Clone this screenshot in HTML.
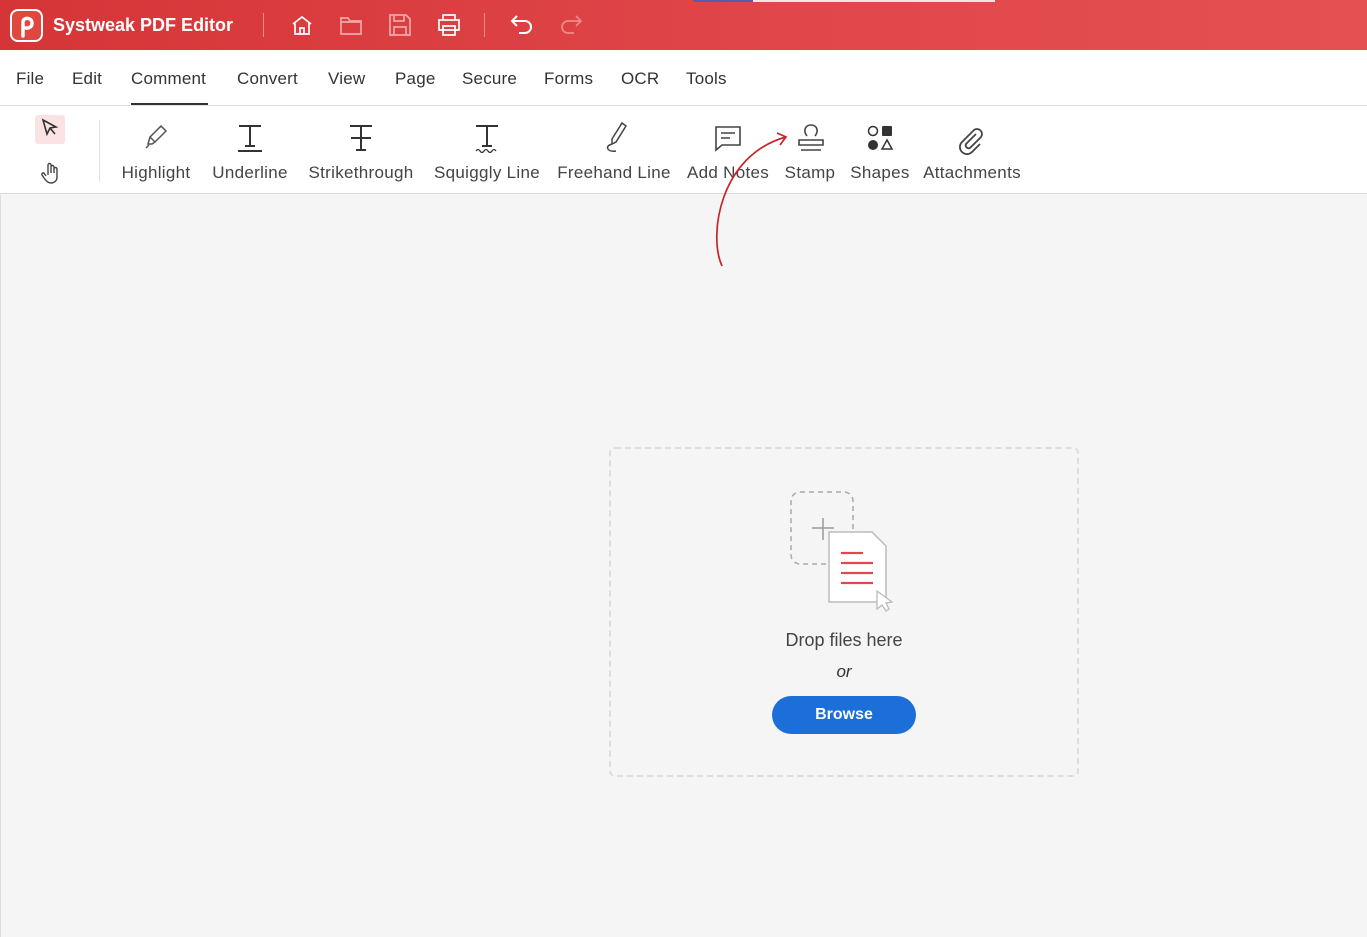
<!DOCTYPE html>
<html><head><meta charset="utf-8"><style>
*{margin:0;padding:0;box-sizing:border-box}
body{width:1367px;height:937px;overflow:hidden;background:#f5f5f5;font-family:"Liberation Sans",sans-serif;position:relative}
.top{position:absolute;left:0;top:0;width:1367px;height:50px;background:linear-gradient(90deg,#d63537,#e0474b 60%,#e55052)}
.menu{position:absolute;top:50px;left:0;width:1367px;height:56px;background:#fff;border-bottom:1px solid #e2e2e2}
.menu span{position:absolute;top:19px;font-size:17px;color:#333;letter-spacing:0.2px}
.tb{position:absolute;top:106px;left:0;width:1367px;height:88px;background:#fff;border-bottom:1px solid #d8d8d8}
.lbl{position:absolute;top:57px;font-size:17px;color:#444;white-space:nowrap;transform:translateX(-50%);letter-spacing:0.3px}
.ic{position:absolute}
.t{position:absolute;color:#fff}
</style></head><body>
<div class="top">
 <div style="position:absolute;left:10px;top:9px;width:33px;height:33px;border-radius:8px;border:2px solid #fff;background:#e0473f"></div>
 <svg class="ic" style="left:16px;top:14px" width="22" height="24"><path d="M7 22V10 M7 8c0-5 9-5 9 1s-6 5-6 5" stroke="#fff" stroke-width="3.5" fill="none" stroke-linecap="round"/></svg>
 <div class="t" style="left:53px;top:15px;font-size:18px;font-weight:bold">Systweak PDF Editor</div>
 <div style="position:absolute;left:263px;top:13px;width:1px;height:24px;background:#f08a8a"></div>
 <svg class="ic" style="left:290px;top:14px" width="24" height="22" fill="none" stroke="#fff" stroke-width="1.7"><path d="M3 10L12 3l9 7M5 9v11h14V9M10 20v-6h4v6"/></svg>
 <svg class="ic" style="left:339px;top:14px" width="24" height="22" fill="none" stroke="#f3a8a8" stroke-width="1.7"><path d="M2 4h7l2 3h11v13H2z M2 8h20"/></svg>
 <svg class="ic" style="left:388px;top:13px" width="24" height="24" fill="none" stroke="#f3a8a8" stroke-width="1.7"><path d="M2 2h16l4 4v16H2z M6 2v6h10V2 M6 22v-8h12v8"/></svg>
 <svg class="ic" style="left:436px;top:13px" width="26" height="24" fill="none" stroke="#fff" stroke-width="1.7"><path d="M7 7V2h12v5 M3 7h20v10H3z M7 13h12v9H7z"/></svg>
 <div style="position:absolute;left:484px;top:13px;width:1px;height:24px;background:#f08a8a"></div>
 <svg class="ic" style="left:509px;top:13px" width="26" height="24" fill="none" stroke="#fff" stroke-width="2"><path d="M8 3L3 8l5 5 M3 8h13a6 6 0 010 12h-6"/></svg>
 <svg class="ic" style="left:558px;top:13px" width="26" height="24" fill="none" stroke="#f08a8a" stroke-width="1.7"><path d="M18 3l5 5-5 5 M23 8H10a6 6 0 000 12h6"/></svg>
 <div style="position:absolute;left:693px;top:0;width:60px;height:2px;background:#5a5ab0"></div>
 <div style="position:absolute;left:753px;top:0;width:242px;height:2px;background:#f2e6e2"></div>
</div>
<div class="menu">
 <span style="left:16px">File</span><span style="left:72px">Edit</span><span style="left:131px">Comment</span><span style="left:237px">Convert</span><span style="left:328px">View</span><span style="left:395px">Page</span><span style="left:462px">Secure</span><span style="left:544px">Forms</span><span style="left:621px">OCR</span><span style="left:686px">Tools</span>
 <div style="position:absolute;left:131px;top:53px;width:77px;height:2px;background:#333"></div>
</div>
<div class="tb">
 <div style="position:absolute;left:35px;top:9px;width:30px;height:29px;background:#fbe3e3;border-radius:3px"></div>
 <svg class="ic" style="left:40px;top:12px" width="20" height="22" fill="none" stroke="#333" stroke-width="1.6"><path d="M3 2l13 7-6 1-3 6z M10 10l5 6"/></svg>
 <svg class="ic" style="left:40px;top:55px" width="22" height="24" fill="none" stroke="#444" stroke-width="1.4"><path d="M8 14V4a1.5 1.5 0 013 0v8V6a1.5 1.5 0 013 0v6V8a1.5 1.5 0 013 0v8c0 4-3 6-6 6s-5-2-7-5l-2-3a1.5 1.5 0 012-2l2 3"/></svg>
 <div style="position:absolute;left:99px;top:14px;width:1px;height:62px;background:#e2e2e2"></div>
 <svg class="ic" style="left:142px;top:17px" width="28" height="30" fill="none" stroke="#555" stroke-width="1.5"><path d="M19 3l5 5-11 11-5-5z M8 14l-2 7 4 0 3-2 M4 25l3-3"/></svg>
 <svg class="ic" style="left:236px;top:17px" width="28" height="30" fill="none" stroke="#333" stroke-width="2"><path d="M3 3h22 M14 3v20 M9 23h10 M2 28h24"/></svg>
 <svg class="ic" style="left:347px;top:17px" width="28" height="30" fill="none" stroke="#333" stroke-width="2"><path d="M3 3h22 M14 3v24 M9 27h10 M4 15h20"/></svg>
 <svg class="ic" style="left:473px;top:17px" width="28" height="30" fill="none" stroke="#333" stroke-width="2"><path d="M3 3h22 M14 3v20 M9 23h10"/><path d="M3 28q2-3 4 0t4 0 4 0 4 0 4 0" stroke-width="1.3"/></svg>
 <svg class="ic" style="left:600px;top:14px" width="30" height="38" fill="none" stroke="#444" stroke-width="1.5"><path d="M22 3l4 3-10 16-4 2 0-5z M12 24q-6 2-4 5t8 2"/></svg>
 <svg class="ic" style="left:714px;top:19px" width="28" height="28" fill="none" stroke="#444" stroke-width="1.6"><path d="M2 2h24v18H8l-6 5z M7 8h14 M7 13h9"/></svg>
 <svg class="ic" style="left:796px;top:16px" width="30" height="32" fill="none" stroke="#444" stroke-width="1.6"><path d="M11 14c-4-5-2-11 4-11s8 6 4 11 M3 18h24v5H3z M5 28h20" /></svg>
 <svg class="ic" style="left:865px;top:18px" width="30" height="30"><circle cx="8" cy="7" r="4.5" fill="none" stroke="#333" stroke-width="1.5"/><rect x="17" y="2" width="10" height="10" rx="1" fill="#333"/><circle cx="8" cy="21" r="5" fill="#333"/><path d="M22 16l5 9h-10z" fill="none" stroke="#333" stroke-width="1.5"/></svg>
 <svg class="ic" style="left:956px;top:19px" width="32" height="32" fill="none" stroke="#444" stroke-width="1.8"><path d="M20 9l-10 10a3 3 0 004 4l11-11a5 5 0 00-7-7L6 17a7 7 0 0010 10l8-8"/></svg>
 <div class="lbl" style="left:156px">Highlight</div>
 <div class="lbl" style="left:250px">Underline</div>
 <div class="lbl" style="left:361px">Strikethrough</div>
 <div class="lbl" style="left:487px">Squiggly Line</div>
 <div class="lbl" style="left:614px">Freehand Line</div>
 <div class="lbl" style="left:728px">Add Notes</div>
 <div class="lbl" style="left:810px">Stamp</div>
 <div class="lbl" style="left:880px">Shapes</div>
 <div class="lbl" style="left:972px">Attachments</div>
</div>
<div style="position:absolute;left:0;top:195px;width:1px;height:742px;background:#ddd"></div>
<svg class="ic" style="left:700px;top:125px" width="100" height="150" fill="none" stroke="#c8252b" stroke-width="1.7"><path d="M22 141C8 110 20 30 86 12 M77 8l9 4-6 8"/></svg>
<div style="position:absolute;left:609px;top:447px;width:470px;height:330px;border:2px dashed #ddd;border-radius:6px"></div>
<svg class="ic" style="left:785px;top:488px" width="120" height="130" fill="none">
 <rect x="6" y="4" width="62" height="72" rx="9" stroke="#aaa" stroke-width="1.5" stroke-dasharray="5 4"/>
 <path d="M38 30v22 M27 40h22" stroke="#999" stroke-width="1.5"/>
 <path d="M44 44h43l14 14v56H44z" fill="#fff" stroke="#bbb" stroke-width="1.5"/>
 <path d="M56 65h22 M56 75h32 M56 85h32 M56 95h32" stroke="#e04850" stroke-width="2.2"/>
 <path d="M92 103l0 18 5-4 4 6 3-2-3-6 6-1z" fill="#fff" stroke="#bbb" stroke-width="1.3"/>
</svg>
<div style="position:absolute;left:744px;top:630px;width:200px;text-align:center;font-size:18px;color:#444">Drop files here</div>
<div style="position:absolute;left:744px;top:662px;width:200px;text-align:center;font-style:italic;font-size:17px;color:#333">or</div>
<div style="position:absolute;left:772px;top:696px;width:144px;height:38px;border-radius:19px;background:#1c6fd8;color:#fff;font-size:16px;font-weight:bold;text-align:center;line-height:38px">Browse</div>
</body></html>
